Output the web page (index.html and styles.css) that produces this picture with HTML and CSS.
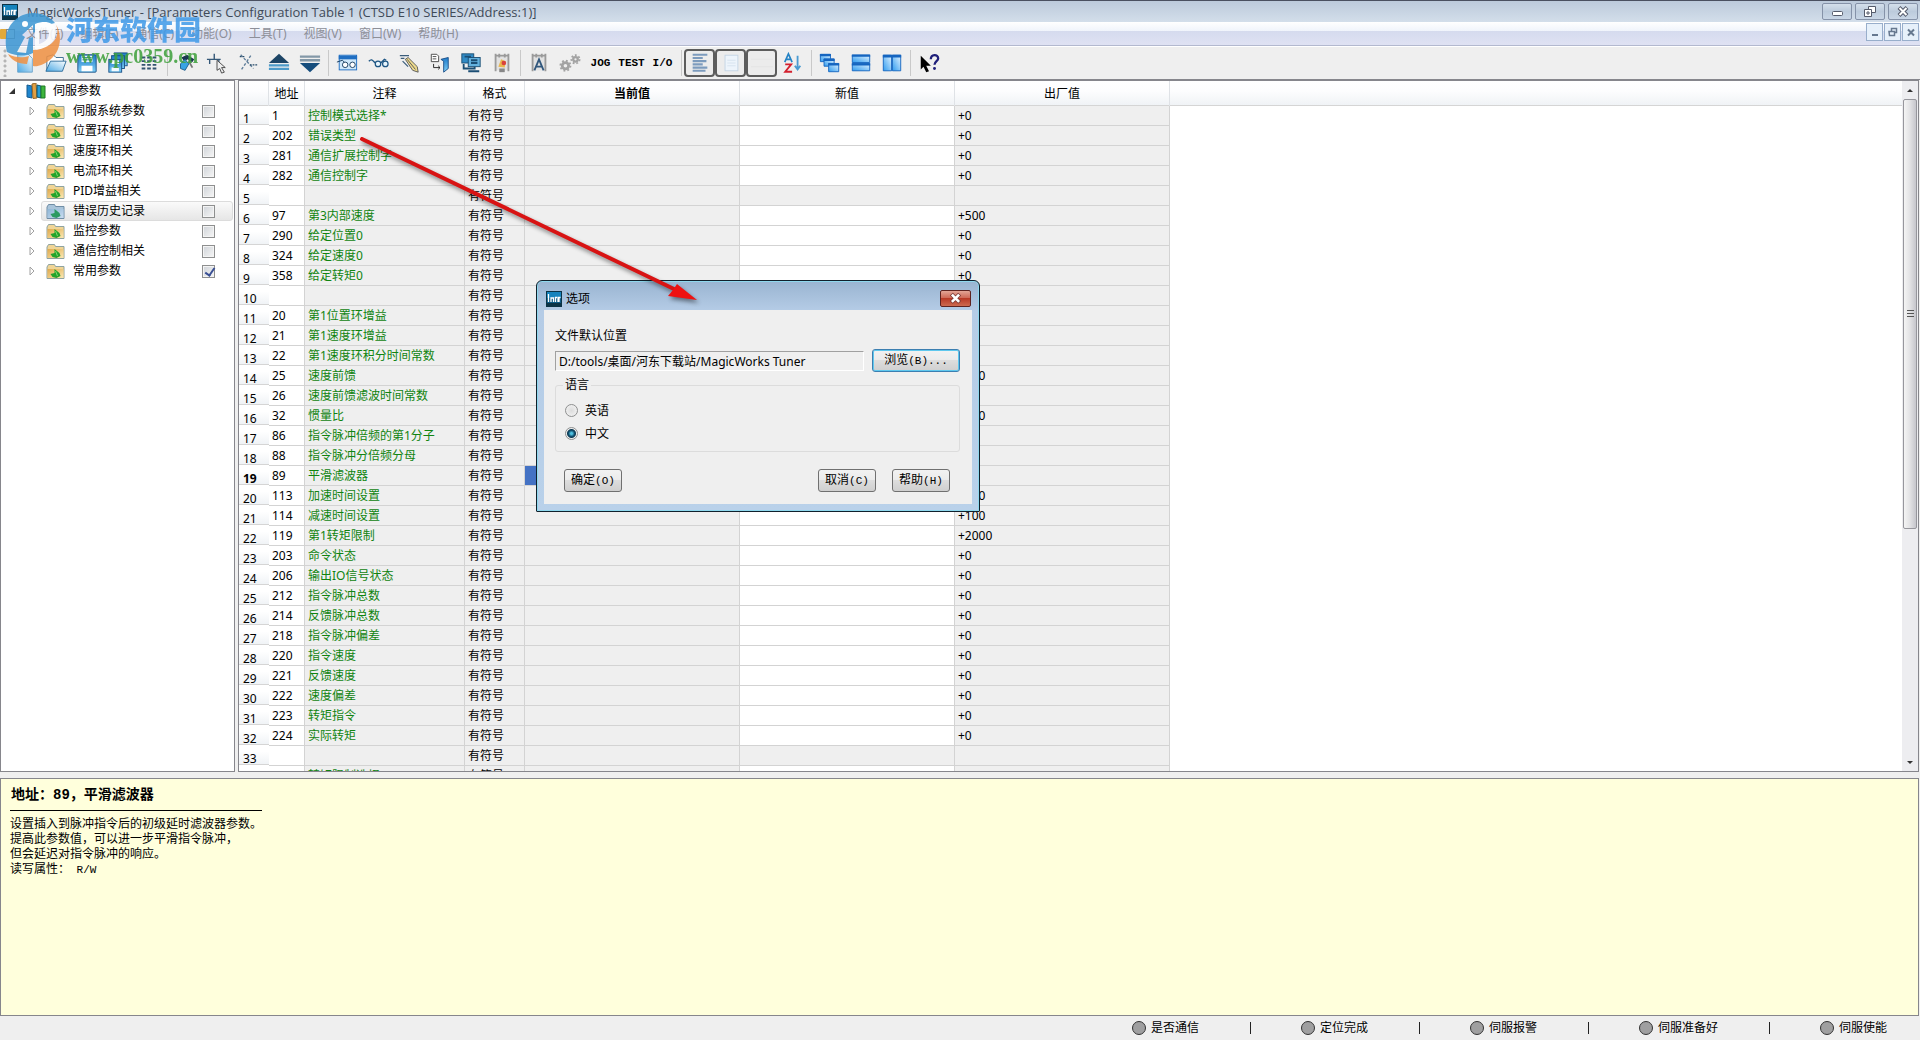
FILE: index.html
```html
<!DOCTYPE html>
<html lang="zh-CN">
<head>
<meta charset="utf-8">
<title>MagicWorksTuner</title>
<link rel="stylesheet" href="styles.css">
</head>
<body>
<svg class="defs" aria-hidden="true">
  <defs>
    <linearGradient id="blue" x1="0" y1="0" x2="0" y2="1"><stop offset="0" stop-color="#1c78c8"/><stop offset="1" stop-color="#7fd0f7"/></linearGradient>
    <linearGradient id="pale" x1="1" y1="0" x2="0" y2="1"><stop offset="0" stop-color="#ffffff"/><stop offset="1" stop-color="#4aa8e4"/></linearGradient>
    <linearGradient id="tile" x1="1" y1="0" x2="0" y2="1"><stop offset="0" stop-color="#e4f4ff"/><stop offset="1" stop-color="#2f9cf0"/></linearGradient>
    <linearGradient id="gold" x1="0" y1="0" x2="1" y2="1"><stop offset="0" stop-color="#e0a94c"/><stop offset="1" stop-color="#fbe9b4"/></linearGradient>
    <linearGradient id="sky" x1="0" y1="0" x2="1" y2="1"><stop offset="0" stop-color="#8fb6d6"/><stop offset="1" stop-color="#c9dcf0"/></linearGradient>
    <symbol id="app" viewBox="0 0 16 16"><rect width="16" height="16" fill="#0b3346"/><rect x="1" y="1" width="14" height="11" fill="#1583bd"/><rect x="1" y="7" width="14" height="5" fill="#0c5a86"/><path d="M2.500 3v8M5 11V7h2.500v4M9.500 11V6.500h1.500M12 11V6.500h2.500M13 6.500V11" stroke="#fff" stroke-width="1.300" fill="none"/></symbol>
    <symbol id="folder" viewBox="0 0 20 17"><path d="M1.500 4 3 1.500h6l1 2h8.500v12h-17z" fill="#f0d596" stroke="#8fa3a0"/><path d="M2 6h16v9H2z" fill="url(#gold)"/><path d="M5 11l4-1V6l5 4 1 3-4 2-4-1z" fill="#24a32c"/><path d="M10 8l2 5" stroke="#7fd86e"/></symbol>
    <symbol id="folder-hot" viewBox="0 0 20 17"><path d="M1.500 4 3 1.500h6l1 2h8.500v12h-17z" fill="#a9c4da" stroke="#6f8da5"/><path d="M2 6h16v9H2z" fill="url(#sky)"/><path d="M5 11l4-1V6l5 4 1 3-4 2-4-1z" fill="#2c9a62"/></symbol>
  </defs>
</svg>

<header class="titlebar">
  <svg class="appicon"><use href="#app"/></svg>
  <h1>MagicWorksTuner - [Parameters Configuration Table 1 (CTSD E10 SERIES/Address:1)]</h1>
  <div class="winbtns">
    <button aria-label="最小化"><svg viewBox="0 0 28 15"><rect x="9.500" y="7.500" width="10" height="4" rx="1" fill="#fff" stroke="#555b6b"/></svg></button>
    <button aria-label="还原"><svg viewBox="0 0 28 15"><path d="M12.500 2.500h7v6h-7z" fill="#fff" stroke="#555b6b"/><path d="M8.500 5.500h7v7h-7z" fill="#fff" stroke="#555b6b"/><path d="M11 8h2v2h-2z" fill="#fff" stroke="#555b6b"/></svg></button>
    <button aria-label="关闭"><svg viewBox="0 0 28 15"><path d="M10 3.500l8 8M18 3.500l-8 8" stroke="#555b6b" stroke-width="4"/><path d="M10.500 4l7 7M17.500 4l-7 7" stroke="#fff" stroke-width="2"/></svg></button>
  </div>
</header>

<nav class="menubar">
  <svg class="docicon" viewBox="0 0 16 12"><rect x="0" y="1" width="9" height="10" rx="1" fill="#e2a93a"/><rect x="6.500" y="1.500" width="8" height="9" fill="#eee" stroke="#888"/></svg>
  <a href="#">文件(F)</a><a href="#">编辑(E)</a><a href="#">通信(C)</a><a href="#">功能(O)</a><a href="#">工具(T)</a><a href="#">视图(V)</a><a href="#">窗口(W)</a><a href="#">帮助(H)</a>
  <div class="mdibtns">
    <button aria-label="最小化子窗口"><svg viewBox="0 0 15 16"><path d="M5 11h6" stroke="#66788f" stroke-width="2"/></svg></button>
    <button aria-label="还原子窗口"><svg viewBox="0 0 15 16"><path d="M6.500 7V4.500h5v4H10M4 7.500h5.500v4h-5z" fill="none" stroke="#66788f" stroke-width="1.500"/></svg></button>
    <button aria-label="关闭子窗口"><svg viewBox="0 0 15 16"><path d="M5 5.500l6 6M11 5.500l-6 6" stroke="#66788f" stroke-width="2"/></svg></button>
  </div>
</nav>

<div class="toolbar" role="toolbar">
  <span class="grip"></span>
  <button aria-label="新建"><svg viewBox="0 0 24 24"><path d="M4 2h11l5 5v15H4z" fill="url(#pale)" stroke="#6fa5cc"/></svg></button>
  <button aria-label="打开"><svg viewBox="0 0 24 24"><path d="M2 20V5l7-2 3 3h8v4" fill="#fff" stroke="#35698f"/><path d="M1 21 6 10h17l-4 11z" fill="url(#pale)" stroke="#2b6a99"/></svg></button>
  <button aria-label="保存"><svg viewBox="0 0 24 24"><rect x="2" y="3" width="20" height="19" rx="1" fill="url(#blue)" stroke="#174f86"/><rect x="6" y="4" width="12" height="7" fill="#e8f4fb"/><path d="M7 6h10M7 8.500h10" stroke="#2f7dbb"/><rect x="6" y="15" width="12" height="6" fill="#fff"/></svg></button>
  <button aria-label="全部保存"><svg viewBox="0 0 24 24"><g stroke="#174f86" fill="url(#blue)"><rect x="8" y="1" width="14" height="14"/><rect x="5" y="4" width="14" height="14"/><rect x="2" y="8" width="14" height="14"/></g><path d="M5 9h8v4H5zM5 17h8v4H5z" fill="#f3faff"/></svg></button>
  <button aria-label="列表"><svg viewBox="0 0 24 24"><path d="M4 6h4m2 0h4m2 0h4M4 10h4m2 0h4m2 0h4M4 14h4m2 0h4m2 0h4M4 18h4m2 0h4m2 0h4" stroke="#33536f" stroke-width="2"/></svg></button>
  <i class="sep"></i>
  <button aria-label="连接"><svg viewBox="0 0 24 24"><path d="M7 6l6-3 8 5-2 3-3-1-2-2-4 2z" fill="#1b3550"/><path d="M6 13l5-5 4 5-4 7-5-2z" fill="#38a3e4" stroke="#1c5c8c"/><path d="M15 10l4 7" stroke="#777" stroke-width="2"/></svg></button>
  <button aria-label="选择节点"><svg viewBox="0 0 24 24"><path d="M1 8h15M4 8v5M9 2v6M14 8v3" stroke="#355878" fill="none" stroke-width="1.500"/><path d="M12 9l9 8h-4l3 5-3 1-2-5-3 2z" fill="#eee" stroke="#444"/></svg></button>
  <button aria-label="断开"><svg viewBox="0 0 24 24"><path d="M4 3l14 15M15 4L5 19" stroke="#5e7d99" stroke-dasharray="3 2" stroke-width="1.500"/><path d="M3 5h6M14 14h8" stroke="#294c6b" stroke-width="1.500" stroke-dasharray="2 1"/></svg></button>
  <button aria-label="上传"><svg viewBox="0 0 24 24"><path d="M12 2l11 10H1z" fill="#1d4566"/><path d="M1 14.500h22M1 18.500h22" stroke="#4c9ac9" stroke-width="2.500"/></svg></button>
  <button aria-label="下载"><svg viewBox="0 0 24 24"><path d="M1 5h22M1 9h22" stroke="#8398a8" stroke-width="2.500"/><path d="M1 12h22L12 22z" fill="#154d7d"/></svg></button>
  <i class="sep"></i>
  <button aria-label="监视窗口"><svg viewBox="0 0 24 24"><rect x="3.500" y="3.500" width="19" height="16" fill="#cfe8fa" stroke="#1f6ec2"/><path d="M3 4h20v4H3z" fill="#1f6ec2"/><path d="M1 11l6-2 3 3" fill="none" stroke="#153a5c"/><circle cx="10" cy="14" r="3" fill="#fff" stroke="#153a5c"/><circle cx="18" cy="14" r="3" fill="#fff" stroke="#153a5c"/></svg></button>
  <button aria-label="监视"><svg viewBox="0 0 24 24"><path d="M2 10c3-3 4-1 7 2m6 0l4-4 2 1" fill="none" stroke="#1d5583" stroke-width="1.500"/><circle cx="12" cy="13" r="3" fill="#e8f5fc" stroke="#1d5583" stroke-width="1.300"/><circle cx="20" cy="13" r="3" fill="#e8f5fc" stroke="#1d5583" stroke-width="1.300"/></svg></button>
  <button aria-label="编辑"><svg viewBox="0 0 24 24"><path d="M2 4h10M3 7h4M5 10l6 6" stroke="#3b5d7b" stroke-width="1.300"/><path d="M8 8l3-2 10 10 1 6-6-2z" fill="#ecd98b" stroke="#555"/><path d="M10 8l9 11" stroke="#555"/></svg></button>
  <button aria-label="转换"><svg viewBox="0 0 24 24"><path d="M2.500 2.500h6l2 2v6h-8z" fill="#fff" stroke="#444"/><path d="M4 5h4M4 7.500h4" stroke="#444"/><path d="M13 8l8-2v12l-5 4V10z" fill="url(#blue)" stroke="#1c4f88"/><path d="M5 13v4h7l-2-2m2 2l-2 2" fill="none" stroke="#222"/></svg></button>
  <button aria-label="网络"><svg viewBox="0 0 24 24"><rect x="2" y="2" width="13" height="10" fill="#318ac4" stroke="#1b4e74"/><rect x="9" y="6" width="13" height="10" fill="#63b1de" stroke="#1b4e74"/><path d="M4 13v5h12v-2M9 21h12M5 5h7M12 9h7M12 12h7" stroke="#1b4e74" stroke-width="2" fill="none"/></svg></button>
  <button aria-label="报警"><svg viewBox="0 0 24 24"><path d="M5 4h14v16H5z" fill="#e2e2e2"/><path d="M5 2v19M9 2v4M15 2v4M19 2v19M4 4h16" stroke="#9a9a9a" stroke-width="2" fill="none"/><path d="M8 16l3-8 5 2-1 7z" fill="#eab64d"/><circle cx="14" cy="12" r="2.500" fill="#d9423c"/><path d="M9 18h6v4H9z" fill="#888"/></svg></button>
  <i class="sep"></i>
  <button aria-label="自动"><svg viewBox="0 0 24 24"><path d="M5 4h14v16H5z" fill="#e2e2e2"/><path d="M5 2v19M9 2v4M15 2v4M19 2v19M4 4h16" stroke="#9a9a9a" stroke-width="2" fill="none"/><path d="M7 20l5-12 5 12M9 16h6" stroke="#31577c" stroke-width="2" fill="none"/></svg></button>
  <button aria-label="设置"><svg viewBox="0 0 24 24"><g fill="none" stroke="#a3a3a3"><circle cx="7" cy="15" r="3.500" stroke-width="3"/><circle cx="7" cy="15" r="5.500" stroke-width="2" stroke-dasharray="2 2.300"/><circle cx="18" cy="8" r="2.500" stroke-width="2.500"/><circle cx="18" cy="8" r="4.500" stroke-width="2" stroke-dasharray="2 2"/></g></svg></button>
  <button class="word">JOG</button>
  <button class="word">TEST</button>
  <button class="word">I/O</button>
  <i class="sep"></i>
  <button class="on" aria-pressed="true" aria-label="文本"><svg viewBox="0 0 24 24"><path d="M4 3h16M4 6.500h11M4 10h15M4 13.500h11M4 17h16M4 20.500h14" stroke="#7c9bbd" stroke-width="2.300"/></svg></button>
  <button class="on" aria-pressed="true" aria-label="页面"><svg viewBox="0 0 24 24"><rect x="5.500" y="3.500" width="14" height="17" fill="#edf4fb" stroke="#c4d4e4"/><path d="M8 9h9M8 12h9M8 15h9" stroke="#d5e1ee"/></svg></button>
  <button class="on" aria-pressed="true" aria-label="网格"><svg viewBox="0 0 24 24"><path d="M0 8h24M0 16h24" stroke="#e4e4e4"/></svg></button>
  <button aria-label="排序"><svg viewBox="0 0 24 24"><path d="M3 11l4-9 4 9M4.500 8h5" stroke="#2583c5" stroke-width="1.800" fill="none"/><path d="M3.500 13.500H10L3.500 21.500H11" stroke="#d3202e" stroke-width="2" fill="none"/><path d="M17 4v14M14 15l3 4 3-4" stroke="#4a9bd1" stroke-width="2" fill="none"/></svg></button>
  <i class="sep"></i>
  <button aria-label="层叠"><svg viewBox="0 0 24 24"><g fill="url(#tile)" stroke="#1565c0"><path d="M1.500 2.500h11v8h-11z"/><path d="M5.500 7.500h11v8h-11z"/><path d="M10.500 12.500h11v9h-11z"/></g><path d="M1 3.500h12M5 8.500h12M10 13.500h12" stroke="#1565c0" stroke-width="2.500"/></svg></button>
  <button aria-label="横向平铺"><svg viewBox="0 0 24 24"><g fill="url(#tile)" stroke="#1565c0"><path d="M2.500 3.500h19v8h-19z"/><path d="M2.500 12.500h19v8h-19z"/></g><path d="M2 4h20M2 13.500h20" stroke="#1565c0" stroke-width="2.500"/></svg></button>
  <button aria-label="纵向平铺"><svg viewBox="0 0 24 24"><g fill="url(#tile)" stroke="#1565c0"><path d="M2.500 3.500h9v17h-9z"/><path d="M12.500 3.500h9v17h-9z"/></g><path d="M2 4.500h20" stroke="#1565c0" stroke-width="3"/></svg></button>
  <i class="sep"></i>
  <button aria-label="这是什么"><svg viewBox="0 0 24 24"><path d="M3 4v15l3-3 3 6 3-1-3-6h5z" fill="#000"/><path d="M14 8c0-6 8-6 8-1 0 3-4 3-4 7" stroke="#20207a" stroke-width="2.500" fill="none"/><circle cx="18" cy="18" r="1.600" fill="#20207a"/></svg></button>
</div>

<main class="workspace">
  <aside class="tree">
    <div class="root">
      <svg class="twist" viewBox="0 0 8 8"><path d="M7 1v6H1z" fill="#333"/></svg>
      <svg class="books" viewBox="0 0 20 16"><path d="M1 2l5 1v12l-5-1z" fill="#1f86cf" stroke="#155a8e"/><path d="M6 1l4-1 1 15-4 .5z" fill="#e2a044" stroke="#96682a"/><path d="M11 2l4 1v12l-4-1z" fill="#249bd5" stroke="#156"/><path d="M15 3h4v12h-4z" fill="#3db53d" stroke="#1f7a25"/></svg>
      <span>伺服参数</span>
    </div>
    <ul>
      <li><svg class="tri" viewBox="0 0 6 10"><path d="M1 1l4 4-4 4z" fill="#fff" stroke="#a0a0a0"/></svg><label><svg class="fold"><use href="#folder"/></svg><span>伺服系统参数</span><input type="checkbox"></label></li>
      <li><svg class="tri" viewBox="0 0 6 10"><path d="M1 1l4 4-4 4z" fill="#fff" stroke="#a0a0a0"/></svg><label><svg class="fold"><use href="#folder"/></svg><span>位置环相关</span><input type="checkbox"></label></li>
      <li><svg class="tri" viewBox="0 0 6 10"><path d="M1 1l4 4-4 4z" fill="#fff" stroke="#a0a0a0"/></svg><label><svg class="fold"><use href="#folder"/></svg><span>速度环相关</span><input type="checkbox"></label></li>
      <li><svg class="tri" viewBox="0 0 6 10"><path d="M1 1l4 4-4 4z" fill="#fff" stroke="#a0a0a0"/></svg><label><svg class="fold"><use href="#folder"/></svg><span>电流环相关</span><input type="checkbox"></label></li>
      <li><svg class="tri" viewBox="0 0 6 10"><path d="M1 1l4 4-4 4z" fill="#fff" stroke="#a0a0a0"/></svg><label><svg class="fold"><use href="#folder"/></svg><span>PID增益相关</span><input type="checkbox"></label></li>
      <li class="hot"><svg class="tri" viewBox="0 0 6 10"><path d="M1 1l4 4-4 4z" fill="#fff" stroke="#a0a0a0"/></svg><label><svg class="fold"><use href="#folder-hot"/></svg><span>错误历史记录</span><input type="checkbox"></label></li>
      <li><svg class="tri" viewBox="0 0 6 10"><path d="M1 1l4 4-4 4z" fill="#fff" stroke="#a0a0a0"/></svg><label><svg class="fold"><use href="#folder"/></svg><span>监控参数</span><input type="checkbox"></label></li>
      <li><svg class="tri" viewBox="0 0 6 10"><path d="M1 1l4 4-4 4z" fill="#fff" stroke="#a0a0a0"/></svg><label><svg class="fold"><use href="#folder"/></svg><span>通信控制相关</span><input type="checkbox"></label></li>
      <li><svg class="tri" viewBox="0 0 6 10"><path d="M1 1l4 4-4 4z" fill="#fff" stroke="#a0a0a0"/></svg><label><svg class="fold"><use href="#folder"/></svg><span>常用参数</span><input type="checkbox" checked></label></li>
    </ul>
  </aside>

  <section class="sheet">
    <div class="view">
      <table>
        <colgroup><col class="c-num"><col class="c-addr"><col class="c-note"><col class="c-fmt"><col class="c-val"><col class="c-val"><col class="c-val"></colgroup>
        <thead><tr><th></th><th>地址</th><th>注释</th><th>格式</th><th class="cur">当前值</th><th>新值</th><th>出厂值</th></tr></thead>
        <tbody>
          <tr><th><span>1</span></th><td>1</td><td>控制模式选择*</td><td>有符号</td><td></td><td></td><td>+0</td></tr>
          <tr><th><span>2</span></th><td>202</td><td>错误类型</td><td>有符号</td><td></td><td></td><td>+0</td></tr>
          <tr><th><span>3</span></th><td>281</td><td>通信扩展控制字</td><td>有符号</td><td></td><td></td><td>+0</td></tr>
          <tr><th><span>4</span></th><td>282</td><td>通信控制字</td><td>有符号</td><td></td><td></td><td>+0</td></tr>
          <tr class="blank"><th><span>5</span></th><td></td><td></td><td>有符号</td><td></td><td></td><td></td></tr>
          <tr><th><span>6</span></th><td>97</td><td>第3内部速度</td><td>有符号</td><td></td><td></td><td>+500</td></tr>
          <tr><th><span>7</span></th><td>290</td><td>给定位置0</td><td>有符号</td><td></td><td></td><td>+0</td></tr>
          <tr><th><span>8</span></th><td>324</td><td>给定速度0</td><td>有符号</td><td></td><td></td><td>+0</td></tr>
          <tr><th><span>9</span></th><td>358</td><td>给定转矩0</td><td>有符号</td><td></td><td></td><td>+0</td></tr>
          <tr class="blank"><th><span>10</span></th><td></td><td></td><td>有符号</td><td></td><td></td><td></td></tr>
          <tr><th><span>11</span></th><td>20</td><td>第1位置环增益</td><td>有符号</td><td></td><td></td><td>+40</td></tr>
          <tr><th><span>12</span></th><td>21</td><td>第1速度环增益</td><td>有符号</td><td></td><td></td><td>+50</td></tr>
          <tr><th><span>13</span></th><td>22</td><td>第1速度环积分时间常数</td><td>有符号</td><td></td><td></td><td>+20</td></tr>
          <tr><th><span>14</span></th><td>25</td><td>速度前馈</td><td>有符号</td><td></td><td></td><td>+300</td></tr>
          <tr><th><span>15</span></th><td>26</td><td>速度前馈滤波时间常数</td><td>有符号</td><td></td><td></td><td>+0</td></tr>
          <tr><th><span>16</span></th><td>32</td><td>惯量比</td><td>有符号</td><td></td><td></td><td>+100</td></tr>
          <tr><th><span>17</span></th><td>86</td><td>指令脉冲倍频的第1分子</td><td>有符号</td><td></td><td></td><td>+1</td></tr>
          <tr><th><span>18</span></th><td>88</td><td>指令脉冲分倍频分母</td><td>有符号</td><td></td><td></td><td>+1</td></tr>
          <tr class="current"><th><span>19</span></th><td>89</td><td>平滑滤波器</td><td>有符号</td><td></td><td></td><td>+0</td></tr>
          <tr><th><span>20</span></th><td>113</td><td>加速时间设置</td><td>有符号</td><td></td><td></td><td>+100</td></tr>
          <tr><th><span>21</span></th><td>114</td><td>减速时间设置</td><td>有符号</td><td></td><td></td><td>+100</td></tr>
          <tr><th><span>22</span></th><td>119</td><td>第1转矩限制</td><td>有符号</td><td></td><td></td><td>+2000</td></tr>
          <tr><th><span>23</span></th><td>203</td><td>命令状态</td><td>有符号</td><td></td><td></td><td>+0</td></tr>
          <tr><th><span>24</span></th><td>206</td><td>输出IO信号状态</td><td>有符号</td><td></td><td></td><td>+0</td></tr>
          <tr><th><span>25</span></th><td>212</td><td>指令脉冲总数</td><td>有符号</td><td></td><td></td><td>+0</td></tr>
          <tr><th><span>26</span></th><td>214</td><td>反馈脉冲总数</td><td>有符号</td><td></td><td></td><td>+0</td></tr>
          <tr><th><span>27</span></th><td>218</td><td>指令脉冲偏差</td><td>有符号</td><td></td><td></td><td>+0</td></tr>
          <tr><th><span>28</span></th><td>220</td><td>指令速度</td><td>有符号</td><td></td><td></td><td>+0</td></tr>
          <tr><th><span>29</span></th><td>221</td><td>反馈速度</td><td>有符号</td><td></td><td></td><td>+0</td></tr>
          <tr><th><span>30</span></th><td>222</td><td>速度偏差</td><td>有符号</td><td></td><td></td><td>+0</td></tr>
          <tr><th><span>31</span></th><td>223</td><td>转矩指令</td><td>有符号</td><td></td><td></td><td>+0</td></tr>
          <tr><th><span>32</span></th><td>224</td><td>实际转矩</td><td>有符号</td><td></td><td></td><td>+0</td></tr>
          <tr class="blank"><th><span>33</span></th><td></td><td></td><td>有符号</td><td></td><td></td><td></td></tr>
          <tr><th><span>34</span></th><td>3</td><td>转矩限制选择</td><td>有符号</td><td></td><td></td><td>+1</td></tr>
        </tbody>
      </table>
    </div>
    <div class="scroll">
      <svg viewBox="0 0 16 18"><path d="M5 11l3-3 3 3z" fill="#333"/></svg>
      <div class="thumb"><i></i></div>
      <div class="rest"></div>
      <svg viewBox="0 0 16 18"><path d="M5 8l3 3 3-3z" fill="#333"/></svg>
    </div>
  </section>
</main>

<section class="notes">
  <h2>地址：89，平滑滤波器</h2>
  <p>设置插入到脉冲指令后的初级延时滤波器参数。</p>
  <p>提高此参数值，可以进一步平滑指令脉冲，</p>
  <p>但会延迟对指令脉冲的响应。</p>
  <p>读写属性：<span class="mono"> R/W</span></p>
</section>

<footer class="status">
  <span class="lamp">是否通信</span><i></i>
  <span class="lamp">定位完成</span><i></i>
  <span class="lamp">伺服报警</span><i></i>
  <span class="lamp">伺服准备好</span><i></i>
  <span class="lamp">伺服使能</span>
</footer>

<form class="dialog" role="dialog" aria-labelledby="dlg-title">
  <div class="dlg-head">
    <svg class="appicon"><use href="#app"/></svg>
    <h2 id="dlg-title">选项</h2>
    <button type="button" class="dlg-close" aria-label="关闭"><svg viewBox="0 0 28 14"><path d="M10 3l8 8M18 3l-8 8" stroke="#7a3a36" stroke-width="4"/><path d="M10.500 3.500l7 7M17.500 3.500l-7 7" stroke="#fff" stroke-width="2.500"/></svg></button>
  </div>
  <div class="dlg-body">
    <label for="path">文件默认位置</label>
    <div class="pathrow">
      <input id="path" type="text" readonly value="D:/tools/桌面/河东下载站/MagicWorks Tuner">
      <button type="button" class="default">浏览<span class="mono">(B)...</span></button>
    </div>
    <fieldset>
      <legend>语言</legend>
      <label><input type="radio" name="lang">英语</label>
      <label><input type="radio" name="lang" checked>中文</label>
    </fieldset>
    <div class="actions">
      <button type="button">确定<span class="mono">(O)</span></button>
      <button type="button" class="push">取消<span class="mono">(C)</span></button>
      <button type="button">帮助<span class="mono">(H)</span></button>
    </div>
  </div>
</form>

<svg class="arrow" viewBox="0 0 350 176" aria-hidden="true">
  <path d="M6 5l312 150" stroke="#d81313" stroke-width="4" stroke-linecap="round"/>
  <path d="M341 166l-29-4 5-6 4-6z" fill="#ee1111"/>
</svg>

<div class="mark" aria-hidden="true">
  <svg viewBox="0 0 56 56">
    <path d="M2 40C-4 16 12 1 28 1c10 0 17 4 22 10l-8 2-14 8v-8L17 23l3 2-8 15 9 1 3-15 4-1v16c-9 4-18 3-26-1z" fill="#3d97d3"/>
    <path d="M30 12c18-7 26 6 18 17-4 5-9 8-17 9v-5c8-2 13-6 13-11 0-4-4-5-10-3v18h-4z" fill="#fff"/>
    <path d="M50 11c8 12 6 27-4 36-7 6-14 8-18 7V38c12 0 22-7 24-15 1-5 0-9-2-12z" fill="#f09143"/>
    <path d="M3 42c7 4 15 4 21 2l-2 8C13 52 6 48 3 42z" fill="#f09143"/>
    <circle cx="20" cy="12" r="3" fill="#fff"/>
  </svg>
  <div><b>河东软件园</b><em>www.pc0359.cn</em></div>
</div>
</body>
</html>
```
FILE: styles.css
```css
* { box-sizing: border-box; }

body {
  margin: 0;
  height: 100vh;
  display: flex;
  flex-direction: column;
  overflow: hidden;
  position: relative;
  background: #efefef;
  color: #000;
  font: 12px/16px "Noto Sans", "Noto Sans CJK SC", sans-serif;
}

button { padding: 0; border: 0; background: none; font: inherit; color: inherit; }
h1, h2, p, ul { margin: 0; padding: 0; font-size: 12px; font-weight: 400; }
svg { display: block; }
.defs { position: absolute; width: 0; height: 0; }
.mono { font: 11px/15px "Liberation Mono", monospace; white-space: pre; }
.appicon { width: 16px; height: 16px; }

/* title bar */
.titlebar {
  flex: none;
  height: 22px;
  display: flex;
  align-items: center;
  gap: 9px;
  padding-left: 2px;
  border-top: 1px solid #4a5060;
  background: linear-gradient(#bccadb, #d3deea);
  color: #3f4a58;
}
.titlebar h1 { font: 13px/16px "Open Sans", sans-serif; }
.winbtns { margin-left: auto; display: flex; gap: 3px; padding-right: 2px; }
.winbtns button {
  width: 30px;
  height: 17px;
  border: 1px solid #8592a8;
  border-radius: 2px;
  background: linear-gradient(#d4dfeb, #bccbdc 50%, #c9d6e6);
}

/* menu bar */
.menubar {
  flex: none;
  height: 24px;
  display: flex;
  align-items: center;
  gap: 17px;
  border-bottom: 1px solid #b3b9cf;
  background: linear-gradient(#fff 0, #f0f4fb 9px, #d5dbee 9px, #dfe2f3);
}
.menubar a { color: #8d8f98; text-decoration: none; }
.docicon { width: 16px; height: 12px; margin-right: -7px; }
.mdibtns { margin-left: auto; display: flex; gap: 1px; padding-right: 1px; align-self: flex-start; padding-top: 1px; }
.mdibtns button { width: 17px; height: 18px; border: 1px solid #98aecb; background: #e6f0fa; }

/* tool bar */
.toolbar {
  flex: none;
  height: 34px;
  display: flex;
  align-items: center;
  background: #efefef;
  border-bottom: 1px solid #86868c;
  border-top: 1px solid #fff;
}
.toolbar button { width: 31px; height: 28px; display: grid; place-items: center; }
.toolbar button svg { width: 22px; height: 22px; }
.toolbar .word { font: bold 11px "Liberation Mono", monospace; }
.toolbar .on { border: 2px solid #5c5c5c; border-radius: 4px; background: #ececec; }
.grip { width: 9px; height: 28px; background: radial-gradient(circle at 5px 2px, #b5b5b5 1px, transparent 2px) 0 0 / 9px 5px; }
.sep { width: 6px; height: 26px; background: linear-gradient(#c9c9c9, #c9c9c9) 3px 0 / 1px 100% no-repeat; }

/* panes */
.workspace { flex: 1; min-height: 0; display: flex; gap: 3px; }
.tree, .sheet { border: 1px solid #86868c; background: #fff; overflow: hidden; }
.tree { width: 235px; flex: none; }
.root { height: 20px; display: flex; align-items: center; padding-left: 7px; }
.twist { width: 8px; height: 8px; }
.books { width: 20px; height: 16px; margin: 0 7px 0 10px; }
.tree ul { list-style: none; }
.tree li { height: 20px; display: flex; align-items: center; padding: 0 1px 0 28px; }
.tri { width: 6px; height: 10px; margin-right: 6px; }
.tree label {
  flex: 1;
  height: 20px;
  display: flex;
  align-items: center;
  gap: 7px;
  padding: 0 17px 0 3px;
  border: 1px solid transparent;
  border-radius: 3px;
}
.tree .hot label { border-color: #dcdcdc; background: linear-gradient(#fafafa, #e6e6e6); }
.fold { width: 21px; height: 17px; }
.tree input {
  appearance: none;
  width: 13px;
  height: 13px;
  margin: 0 0 0 auto;
  border: 1px solid #8e8f8f;
  background: linear-gradient(135deg, #cfd3d8, #f6f6f6);
  box-shadow: inset 0 0 0 1px #f4f4f4;
}
.tree input:checked::after {
  content: "";
  display: block;
  width: 4px;
  height: 8px;
  margin: 0 0 0 4px;
  border: solid #3a4f94;
  border-width: 0 2px 2px 0;
  transform: rotate(35deg);
}

.sheet { flex: 1; min-width: 0; display: flex; margin-right: 1px; }
.view { flex: 1; overflow: hidden; background: linear-gradient(#fff 0, #fdfdfe 10px, #f0f3f6 24px, #d5d5d5 24px, #d5d5d5 25px, #fff 25px); }
table { border-collapse: separate; border-spacing: 0; table-layout: fixed; width: 931px; }
.c-num { width: 30px; }
.c-addr { width: 36px; }
.c-note { width: 160px; }
.c-fmt { width: 60px; }
.c-val { width: 215px; }
th, td { padding: 0; font-weight: 400; white-space: nowrap; overflow: hidden; }
thead th { height: 25px; border-right: 1px solid #dfe2e6; }
thead .cur { font-weight: 700; }
td {
  height: 20px;
  padding: 0 0 1px 3px;
  line-height: 17px;
  border-right: 1px solid #d3d3d3;
  border-bottom: 1px solid #d3d3d3;
  background: #efefef;
}
td:nth-child(2), td:nth-child(6) { background: #fff; }
td:nth-child(3) { color: #108410; }
.blank td:nth-child(6) { background: #efefef; }
tbody th { height: 20px; text-align: left; vertical-align: top; }
tbody th span {
  display: block;
  height: 19px;
  padding-left: 4px;
  line-height: 25px;
  overflow: hidden;
  border-bottom: 1px solid #d5d5d5;
  background: linear-gradient(#fff 30%, #f0f3f6);
}
.current th { font-weight: 700; }
.current td:nth-child(5) { background: #4472c4; }

.scroll { width: 16px; flex: none; display: flex; flex-direction: column; background: #ededf0; }
.scroll svg { height: 18px; flex: none; }
.thumb {
  flex: 431;
  margin: 0 1px;
  display: grid;
  place-items: center;
  border: 1px solid #96969c;
  border-radius: 2px;
  background: linear-gradient(90deg, #f4f4f4, #e4e4e6 45%, #c6c6cc);
}
.thumb i { width: 7px; height: 8px; background: repeating-linear-gradient(#555 0 1px, transparent 1px 3px); }
.rest { flex: 226; }

/* description */
.notes {
  flex: none;
  min-height: 238px;
  margin: 6px 1px 0 0;
  padding: 8px 9px;
  border: 1px solid #86868c;
  background: #ffffdc;
  line-height: 15px;
}
.notes h2 {
  width: 252px;
  margin-bottom: 5px;
  padding: 0 0 7px 1px;
  border-bottom: 1px solid #000;
  font: bold 14px/16px "Liberation Mono", "Noto Sans CJK SC", monospace;
}

/* status bar */
.status { flex: none; height: 24px; display: flex; align-items: center; justify-content: flex-end; gap: 50px; padding-right: 33px; }
.status i { width: 1px; height: 12px; margin-left: 1px; background: #222; }
.lamp { display: flex; align-items: center; gap: 5px; }
.lamp::before { content: ""; width: 12px; height: 12px; border: 1px solid #333; border-radius: 50%; background: #9f9fa0; }

/* options dialog floats over the workspace */
.dialog {
  position: absolute;
  left: 536px;
  top: 280px;
  width: 444px;
  padding: 0 7px 7px;
  border: 1px solid #10202c;
  border-radius: 6px 6px 1px 1px;
  background: linear-gradient(#99b4d1, #b5cce6 30px, #b9d1ea);
  box-shadow: inset 0 0 0 1px #8fd8ee;
}
.dlg-head { height: 29px; display: flex; align-items: center; gap: 4px; padding: 6px 1px 0 2px; }
.dlg-close {
  width: 31px;
  height: 17px;
  margin: -1px 0 0 auto;
  border: 1px solid #5e2320;
  border-radius: 2px;
  background: linear-gradient(#e3a596, #cf6a58 45%, #b93a26 50%, #cc6a50);
}
.dlg-body { padding: 17px 12px 12px 11px; background: #efefef; }
.dlg-body > label { display: block; line-height: 18px; }
.pathrow { display: flex; align-items: center; gap: 8px; margin-top: 4px; }
.pathrow input {
  flex: 1;
  min-width: 0;
  height: 20px;
  padding: 0 3px;
  border: 1px solid #a0a0a0;
  border-right-color: #fff;
  border-bottom-color: #fff;
  background: #efefef;
  font: inherit;
}
.dialog .pathrow button, .actions button {
  width: 58px;
  height: 23px;
  border: 1px solid #707070;
  border-radius: 3px;
  background: linear-gradient(#f2f2f2, #ebebeb 48%, #dddddd 50%, #cfcfcf);
}
.dialog .pathrow .default { width: 88px; border-color: #3c7fb1; box-shadow: inset 0 0 0 1px #5fc8ee; }
fieldset { height: 75px; margin: 5px 0 0; padding: 6px 9px 0; border: 1px solid #dcdcdc; border-radius: 3px; }
legend { padding: 0 2px; margin-left: -2px; }
fieldset label { display: flex; align-items: center; gap: 7px; height: 23px; }
fieldset input {
  appearance: none;
  width: 13px;
  height: 13px;
  margin: 0;
  border: 1px solid #8e8f8f;
  border-radius: 50%;
  background: radial-gradient(#dcdcdc, #f6f6f6);
}
fieldset input:checked { background: radial-gradient(circle, #4fc0e0 1px, #12506e 3px, #0f3c55 4px, #eee 5px); }
.actions { display: flex; gap: 16px; padding: 17px 10px 0 9px; }
.actions .push { margin-left: auto; }

.arrow { position: absolute; left: 356px; top: 134px; width: 350px; height: 176px; pointer-events: none; filter: drop-shadow(2px 3px 2px rgba(0, 0, 0, .45)); }

.mark { position: absolute; left: 5px; top: 12px; display: flex; gap: 5px; opacity: .86; pointer-events: none; }
.mark svg { width: 56px; height: 56px; }
.mark div { display: flex; flex-direction: column; padding-top: 1px; }
.mark b { font: 900 27px/32px "Noto Sans CJK SC", sans-serif; color: #409ae8; }
.mark em { font: bold 20px/22px "Liberation Serif", serif; color: #3fa03c; }
```
